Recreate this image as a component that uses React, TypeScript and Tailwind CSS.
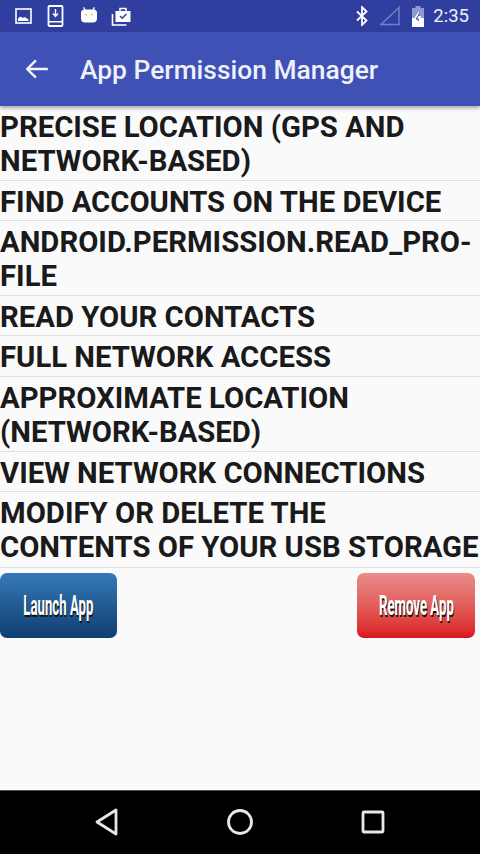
const rows: { text: string[]; h: string }[] = [
  { text: ["PRECISE LOCATION (GPS AND", "NETWORK-BASED)"], h: "h-[75px]" },
  { text: ["FIND ACCOUNTS ON THE DEVICE"], h: "h-[40px]" },
  { text: ["ANDROID.PERMISSION.READ_PRO-", "FILE"], h: "h-[75px]" },
  { text: ["READ YOUR CONTACTS"], h: "h-[40px]" },
  { text: ["FULL NETWORK ACCESS"], h: "h-[41px]" },
  { text: ["APPROXIMATE LOCATION", "(NETWORK-BASED)"], h: "h-[75px]" },
  { text: ["VIEW NETWORK CONNECTIONS"], h: "h-[40px]" },
  { text: ["MODIFY OR DELETE THE", "CONTENTS OF YOUR USB STORAGE"], h: "h-[76px]" },
];

function StatusLeft() {
  return (
    <div className="flex items-center">
      <svg width="18" height="16" viewBox="0 0 18 16" className="ml-[15px]" fill="none">
        <rect x="1" y="1" width="15" height="14" stroke="#fff" strokeWidth="1.6" />
        <path d="M3 13v-2.500l2.500-2 2 1.500 2-1 2.500 1.500 1.500 1V13z" fill="#fff" />
      </svg>
      <svg width="18" height="22" viewBox="0 0 18 22" className="ml-[14px]" fill="none">
        <rect x="1.500" y="1" width="14" height="20" rx="1" stroke="#fff" strokeWidth="1.800" />
        <rect x="2" y="16" width="13" height="1.500" fill="#fff" />
        <path d="M8.500 4v6M6 8.500l2.500 3 2.500-3" stroke="#fff" strokeWidth="1.400" />
      </svg>
      <svg width="18" height="19" viewBox="0 0 18 18" className="ml-[15px] mb-[2px]">
        <path d="M1 6c0-2 2-3 3-3L3 1l1-.5L5.500 3h7L14 .5l1 .5-1 2c1 0 3 1 3 3v6c0 3-2 4-4 4H5c-2 0-4-1-4-4z" fill="#fff" />
        <circle cx="6" cy="8" r="1.300" fill="#e8d9a0" />
        <circle cx="12" cy="8" r="1.300" fill="#e8d9a0" />
      </svg>
      <svg width="21" height="21" viewBox="0 0 21 21" className="ml-[13px]" fill="none">
        <path d="M1.500 8v11h14" stroke="#fff" strokeWidth="1.600" />
        <path d="M4.500 5h15v11h-15z" fill="#fff" />
        <path d="M9 5V2.500h6V5" stroke="#fff" strokeWidth="1.500" />
        <path d="M9 10l2.200 2.200L15.500 8" stroke="#303f9f" strokeWidth="1.500" />
      </svg>
    </div>
  );
}

function StatusRight() {
  return (
    <div className="flex items-center">
      <svg width="14" height="20" viewBox="0 0 14 20" fill="none" stroke="#fff" strokeWidth="1.800">
        <path d="M2 5.500l9.500 9L7 19V1l4.500 4.500L2 14.500" />
      </svg>
      <svg width="22" height="20" viewBox="0 0 22 20" fill="none" className="ml-[10px]" stroke="#6f7fc8" strokeWidth="1.500">
        <path d="M2 18.500L20 1.500v17z" />
      </svg>
      <svg width="14" height="21" viewBox="0 0 14 21" className="ml-[10px]">
        <path d="M4.500 0h5v2H13v19H1V2h3.500z" fill="#8e99cf" />
        <path d="M1 12h12v9H1z" fill="#fff" />
        <path d="M8 5L3.500 12H7l-1 5 4.500-7H7z" fill="#fff" />
        <path d="M8.500 8L5 13h2.500L7 15" stroke="#303f9f" strokeWidth="1" fill="none" />
      </svg>
      <span className="ml-[8px] mr-[11px] text-[18.500px] leading-none text-[#eef0fa] font-['Roboto',sans-serif]">2:35</span>
    </div>
  );
}

function ImgButton({ label, cls, w }: { label: string; cls: string; w: string }) {
  return (
    <div className={`${cls} ${w} h-[65px] rounded-[7px] flex items-center justify-center`}>
      <span className="inline-block scale-x-[0.6] scale-y-[1.25] whitespace-nowrap text-[22px] font-bold text-white font-['Roboto',sans-serif] [text-shadow:1px_2px_0_#111]">
        {label}
      </span>
    </div>
  );
}

export default function App() {
  return (
    <div className="w-[480px] h-[854px] flex flex-col overflow-hidden bg-[#fafafa] font-['Roboto',sans-serif]">
      <div className="h-[32px] shrink-0 bg-[#303f9f] flex items-center justify-between">
        <StatusLeft />
        <StatusRight />
      </div>
      <div className="h-[74px] shrink-0 bg-[#3f51b5] flex items-center shadow-[0_2px_4px_rgba(0,0,0,0.35)] z-10">
        <svg width="26" height="26" viewBox="0 0 24 24" className="ml-[24px]" fill="none" stroke="#f2f3fb" strokeWidth="2.200">
          <path d="M22 12H3M11 4l-8 8 8 8" />
        </svg>
        <span className="ml-[30px] pt-[2px] text-[26.400px] leading-none font-medium text-[#eef0fa]">App Permission Manager</span>
      </div>
      <div className="flex flex-col">
        {rows.map((r) => (
          <div key={r.text[0]} className={`${r.h} pt-[4px] border-b border-[#dedede] text-[#1a1a1a] text-[29.300px] leading-[34.300px] font-bold whitespace-nowrap`}>
            {r.text.map((t) => (
              <div key={t}>{t}</div>
            ))}
          </div>
        ))}
      </div>
      <div className="mt-[5px] flex justify-between pr-[5px]">
        <ImgButton label="Launch App" w="w-[117px]" cls="bg-gradient-to-b from-[#3579b8] to-[#0f3f72]" />
        <ImgButton label="Remove App" w="w-[118px]" cls="bg-gradient-to-b from-[#e98b8d] to-[#d8141d]" />
      </div>
      <div className="flex-1" />
      <div className="h-[64px] shrink-0 bg-black border-t border-[#555] flex items-center">
        <svg width="480" height="63" viewBox="0 0 480 63" fill="none" stroke="#e8e8e8" strokeWidth="2.800" strokeLinejoin="round">
          <path d="M116 19v24L97 31z" />
          <circle cx="240" cy="31" r="11.500" />
          <rect x="363" y="21" width="20" height="20" rx="1" />
        </svg>
      </div>
    </div>
  );
}
